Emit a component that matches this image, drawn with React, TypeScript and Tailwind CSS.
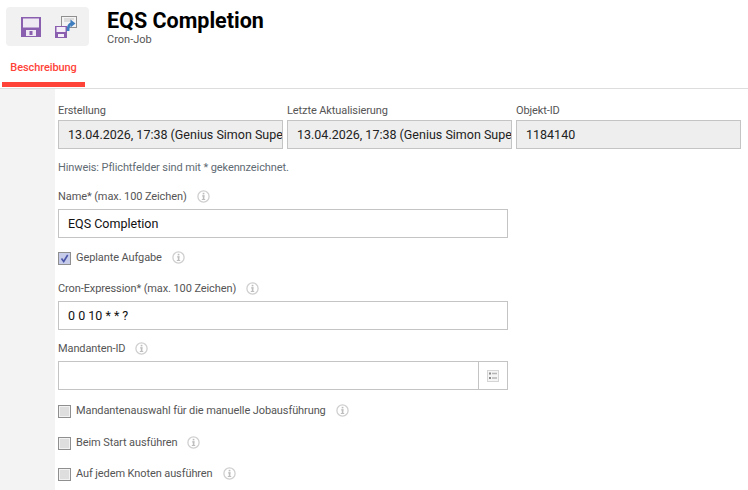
import React from "react";

const Info = ({ className = "" }: { className?: string }) => (
  <svg width="13" height="13" viewBox="0 0 13 13" className={`shrink-0 ${className}`}>
    <circle cx="6.5" cy="6.5" r="5.6" fill="none" stroke="#cfcfcf" strokeWidth="1.3" />
    <rect x="5" y="5.4" width="2.6" height="1" fill="#bdbdbd" />
    <rect x="5.8" y="5.4" width="1.6" height="4" fill="#bdbdbd" />
    <rect x="4.8" y="9" width="3.4" height="1" fill="#bdbdbd" />
    <rect x="5.7" y="2.8" width="1.7" height="1.6" fill="#bdbdbd" />
  </svg>
);

const Floppy = () => (
  <svg width="20" height="20" viewBox="0 0 20 20">
    <path d="M0 0h20v20H0z" fill="#8b5fb0" />
    <rect x="2" y="1.5" width="16" height="9" fill="#efe9f4" />
    <rect x="5" y="13" width="10" height="6" fill="#efe9f4" />
    <rect x="8.500" y="14" width="3" height="4" fill="#8b5fb0" />
  </svg>
);

const Export = () => (
  <svg width="22" height="22" viewBox="0 0 22 22">
    <rect x="6.5" y="0.5" width="15" height="11" fill="#f4f4f4" stroke="#8f8f8f" />
    <path d="M9 3h10M9 5h8" stroke="#c4c4c4" />
    <rect x="0" y="10" width="12" height="12" fill="#8b5fb0" />
    <rect x="1.5" y="11" width="9" height="5" fill="#f3eef7" />
    <rect x="3" y="18" width="6" height="3" fill="#f3eef7" />
    <path d="M13 15c0-4 1-7 3.500-7.500" fill="none" stroke="#3f7fbf" strokeWidth="2.800" />
    <path d="M15.500 3.500l5 4-5 4z" fill="#3f7fbf" />
  </svg>
);

const Readonly = ({ label, value }: { label: string; value: string }) => (
  <div className="flex w-[225px] flex-col">
    <label className="h-[17px] text-[11px] leading-[17px] tracking-[-0.1px] text-[#555]">{label}</label>
    <input
      readOnly
      value={value}
      className="mt-[1px] h-[29px] w-full border border-[#c4c4c4] bg-[#eeeeee] pl-[9px] text-[12.5px] text-[#222] outline-none"
    />
  </div>
);

const Label = ({ text }: { text: string }) => (
  <div className="flex h-[17px] items-center text-[11px] leading-[17px] tracking-[-0.1px] text-[#555]">
    <span>{text}</span>
    <Info className="ml-[10px]" />
  </div>
);

const Check = ({ text, checked, className = "" }: { text: string; checked?: boolean; className?: string }) => (
  <div className={`flex h-[17px] items-center text-[11px] tracking-[-0.1px] text-[#555] ${className}`}>
    <span className="flex h-[13px] w-[13px] items-center justify-center border border-[#8f8f8f] bg-[#dedede] shadow-[inset_0_0_0_1px_#f2f2f2]">
      {checked && (
        <svg width="11" height="11" viewBox="0 0 11 11">
          <rect width="11" height="11" fill="#c5cbe8" />
          <path d="M2.500 5.500l2.200 3 4-6.500" fill="none" stroke="#4a55a8" strokeWidth="1.600" />
        </svg>
      )}
    </span>
    <span className="ml-[5px]">{text}</span>
    <Info className="ml-[10px] -mt-[3px]" />
  </div>
);

export default function App() {
  return (
    <div className="h-[490px] w-[748px] overflow-hidden bg-white font-['Roboto',sans-serif]">
      <header className="h-[89px] border-b border-[#dddddd]">
        <div className="flex pl-[6px] pt-[7px]">
          <div className="flex h-[39px] w-[83px] items-center rounded-[4px] bg-[#f1f1f1] pl-[15px]">
            <Floppy />
            <span className="ml-[14px]">
              <Export />
            </span>
          </div>
          <div className="ml-[18px]">
            <h1 className="text-[21.5px] font-bold leading-[28px] text-black">EQS Completion</h1>
            <p className="-mt-[2px] text-[11px] leading-[14px] text-[#555]">Cron-Job</p>
          </div>
        </div>
        <div className="ml-[2px] mt-[12px] h-[28px] w-[83px] border-b-[5px] border-[#ff4338] pt-[1px] text-center text-[11px] font-medium leading-[15px] tracking-[-0.1px] text-[#ff4338]">
          Beschreibung
        </div>
      </header>
      <div className="flex h-[401px]">
        <aside className="w-[55px] bg-[#f3f3f3]" />
        <main className="flex-1 pl-[3px] pt-[13px]">
          <div className="flex gap-[4px]">
            <Readonly label="Erstellung" value="13.04.2026, 17:38 (Genius Simon Super User)" />
            <Readonly label="Letzte Aktualisierung" value="13.04.2026, 17:38 (Genius Simon Super User)" />
            <Readonly label="Objekt-ID" value="1184140" />
          </div>
          <p className="mt-[10px] h-[17px] text-[11px] leading-[17px] tracking-[-0.1px] text-[#5f6b73]">
            Hinweis: Pflichtfelder sind mit * gekennzeichnet.
          </p>
          <div className="mt-[12px]">
            <Label text="Name* (max. 100 Zeichen)" />
          </div>
          <input
            readOnly
            value="EQS Completion"
            className="mt-[4px] block h-[29px] w-[450px] border border-[#c4c4c4] pl-[9px] text-[12.5px] text-[#111] outline-none"
          />
          <Check text="Geplante Aufgabe" checked className="mt-[12px]" />
          <div className="mt-[13px]">
            <Label text="Cron-Expression* (max. 100 Zeichen)" />
          </div>
          <input
            readOnly
            value="0 0 10 * * ?"
            className="mt-[4px] block h-[29px] w-[450px] border border-[#c4c4c4] pl-[9px] text-[12.5px] text-[#111] outline-none"
          />
          <div className="mt-[10px]">
            <Label text="Mandanten-ID" />
          </div>
          <div className="mt-[4px] flex h-[29px] w-[450px] border border-[#c4c4c4]">
            <div className="flex-1" />
            <button className="flex w-[29px] items-center justify-center border-l border-[#c4c4c4]">
              <svg width="12" height="12" viewBox="0 0 12 12">
                <rect x="0.500" y="0.500" width="11" height="11" fill="#f5f5f5" stroke="#d5d5d5" />
                <rect x="2" y="2.500" width="2" height="2" fill="#8a8a8a" />
                <rect x="2" y="7" width="2" height="2" fill="#8a8a8a" />
                <path d="M5 3.500h5M5 8h5" stroke="#b5b5b5" strokeWidth="1.500" />
              </svg>
            </button>
          </div>
          <Check text="Mandantenauswahl für die manuelle Jobausführung" className="mt-[13px]" />
          <Check text="Beim Start ausführen" className="mt-[15px]" />
          <Check text="Auf jedem Knoten ausführen" className="mt-[14px]" />
        </main>
      </div>
    </div>
  );
}
